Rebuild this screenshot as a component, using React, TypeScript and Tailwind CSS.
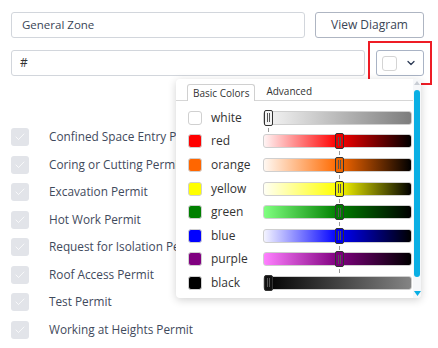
import { ChevronDown, Check } from "lucide-react";

const permits = [
  "Confined Space Entry Permit",
  "Coring or Cutting Permit",
  "Excavation Permit",
  "Hot Work Permit",
  "Request for Isolation Permit",
  "Roof Access Permit",
  "Test Permit",
  "Working at Heights Permit",
];

const colors = [
  { name: "white", swatch: "#ffffff", grad: "linear-gradient(to right,#f7f7f7,#7d7d7d)", thumb: "#f4f4f4", pos: "left", tick: true },
  { name: "red", swatch: "#ff0000", grad: "linear-gradient(to right,#fff4f4,#ff0000 50%,#000000)", thumb: "#ee0000", pos: "mid", tick: true },
  { name: "orange", swatch: "#ff6600", grad: "linear-gradient(to right,#fff8f2,#ff6a00 50%,#000000)", thumb: "#ee6500", pos: "mid", tick: true },
  { name: "yellow", swatch: "#ffff00", grad: "linear-gradient(to right,#fffff4,#ffff00 50%,#000000)", thumb: "#eeee00", pos: "mid", tick: true },
  { name: "green", swatch: "#008000", grad: "linear-gradient(to right,#80ff80,#008000 50%,#000000)", thumb: "#007a00", pos: "mid", tick: true },
  { name: "blue", swatch: "#0000ff", grad: "linear-gradient(to right,#f4f4ff,#0000ff 50%,#000000)", thumb: "#0000ee", pos: "mid", tick: true },
  { name: "purple", swatch: "#800080", grad: "linear-gradient(to right,#ff80ff,#800080 50%,#000000)", thumb: "#7a007a", pos: "mid", tick: true },
  { name: "black", swatch: "#000000", grad: "linear-gradient(to right,#000000,#848484)", thumb: "#111111", pos: "left", tick: false },
];

function Slider({ grad, thumb, pos, tick }: { grad: string; thumb: string; pos: string; tick: boolean }) {
  const left = pos === "left" ? 1 : 72;
  return (
    <div className="relative w-[149px] h-[14px]">
      <div className="w-full h-full rounded-[3px] border border-[#cfcfcf]" style={{ background: grad }} />
      <div
        className="absolute top-[-1px] w-[9px] h-[16px] rounded-[2px] border border-[#333] flex items-center justify-center gap-[1px]"
        style={{ left, background: thumb }}
      >
        <div className="w-px h-[9px] bg-[#555]" />
        <div className="w-px h-[9px] bg-[#555]" />
      </div>
      {tick && <div className="absolute top-[17px] w-px h-[4px] bg-[#999]" style={{ left: left + 4 }} />}
    </div>
  );
}

export default function App() {
  return (
    <div className="relative w-[438px] h-[348px] overflow-hidden bg-white pl-[11px] pt-[12px] pr-[14px] text-[#3f4a5a]" style={{ fontFamily: "'Open Sans', sans-serif" }}>
      {/* Zone + view diagram */}
      <div className="flex gap-[10px]">
        <div className="flex-1 h-[26px] rounded-[3px] border border-[#d2d6dc] flex items-center pl-[10px] text-[11.5px] text-[#3a4556]">
          General Zone
        </div>
        <div className="w-[109px] h-[26px] rounded-[3px] border border-[#aeb5c2] flex items-center justify-center text-[12px] text-[#3a4556]">
          View Diagram
        </div>
      </div>

      {/* Hex + picker button */}
      <div className="flex mt-[12px] gap-[11px]">
        <div className="w-[354px] h-[26px] rounded-[3px] border border-[#d2d6dc] flex items-center pl-[8px] text-[12px] text-[#333]">
          #
        </div>
        <div className="w-[48px] h-[26px] rounded-[3px] border border-[#a9b3c5] flex items-center pl-[5px] gap-[8px]">
          <div className="w-[15px] h-[15px] rounded-[3px] border border-[#d4d4d4] bg-white" />
          <ChevronDown size={12} strokeWidth={2.5} className="text-[#2c3a55]" />
        </div>
      </div>

      {/* Permit list */}
      <div className="mt-[52px] flex flex-col gap-[9.5px]">
        {permits.map((p) => (
          <div key={p} className="flex items-center gap-[20px] h-[18px]">
            <div className="w-[18px] h-[18px] rounded-[3px] bg-[#e2e4e9] flex items-center justify-center shrink-0">
              <Check size={12} strokeWidth={1.5} className="text-white" />
            </div>
            <span className="text-[11.8px] whitespace-nowrap text-[#3f4a5c]">{p}</span>
          </div>
        ))}
      </div>

      {/* Highlight box */}
      <div className="absolute left-[368px] top-[41px] w-[64px] h-[44px] border-2 border-[#ee1c25]" />

      {/* Color popover */}
      <div className="absolute left-[176px] top-[79px] w-[245px] h-[219px] bg-white rounded-[4px] shadow-[0_2px_8px_rgba(0,0,0,0.18)] flex">
        <div className="flex-1 flex flex-col">
          <div className="flex items-end h-[22px] border-b border-[#d6d6d6] pl-[11px] shrink-0">
            <div className="h-[17px] px-[5px] border border-b-0 border-[#d0d0d0] rounded-t-[3px] bg-white text-[10px] text-[#333] flex items-center relative top-px">
              Basic Colors
            </div>
            <div className="h-[17px] px-[11px] text-[10px] text-[#333] flex items-center">Advanced</div>
          </div>
          <div className="flex flex-col pt-[5px]">
            {colors.map((c) => (
              <div key={c.name} className="flex items-center h-[23.6px] pl-[12px] shrink-0">
                <div className="w-[14px] h-[14px] rounded-[3px] border border-[#d0d0d0]" style={{ background: c.swatch }} />
                <span className="ml-[9px] w-[52px] text-[12px] text-[#333]">{c.name}</span>
                <Slider grad={c.grad} thumb={c.thumb} pos={c.pos} tick={c.tick} />
              </div>
            ))}
          </div>
        </div>
        {/* scrollbar */}
        <div className="w-[8px] flex flex-col items-center py-[2px] bg-[#f6f7f9] rounded-r-[4px]">
          <svg width="6" height="4" viewBox="0 0 6 4"><path d="M0 4 L3 0 L6 4 Z" fill="#c8cdd4" /></svg>
          <div className="w-[6px] flex-1 mt-[5px] mb-[14px] rounded-full bg-[#0aafe4]" />
          <svg width="7" height="5" viewBox="0 0 7 5"><path d="M0 0 L7 0 L3.5 5 Z" fill="#0aafe4" /></svg>
        </div>
      </div>
    </div>
  );
}
